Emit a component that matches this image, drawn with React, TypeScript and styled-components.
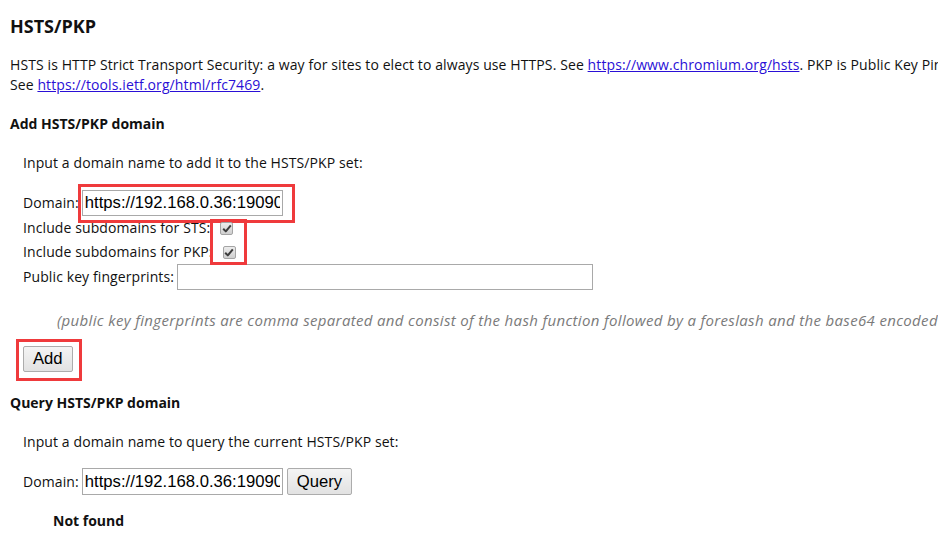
import React from "react";
import styled, { createGlobalStyle } from "styled-components";

const Global = createGlobalStyle`
  html, body {
    margin: 0;
    padding: 0;
    background: #ffffff;
    overflow: hidden;
  }
  body {
    font-family: "Open Sans", "Noto Sans", sans-serif;
    font-size: 14px;
    line-height: 20px;
    letter-spacing: 0.1px;
    color: #111111;
  }
`;

const Page = styled.div`
  padding-left: 10px;
  width: 928px;
  overflow: hidden;
`;

const Title = styled.h2`
  margin: 14px 0 0;
  font-size: 18px;
  line-height: 24px;
  font-weight: 700;
  letter-spacing: 0;
`;

const Intro = styled.p`
  margin: 17px 0 0;
  white-space: nowrap;
`;

const Link = styled.a`
  color: #2a0fd6;
  text-decoration: underline;
`;

const Heading = styled.h4<{ $top: number }>`
  margin: ${(p) => p.$top}px 0 0;
  font-size: 14px;
  line-height: 20px;
  font-weight: 700;
  letter-spacing: 0;
`;

const Section = styled.div`
  margin-left: 13px;
`;

const Prompt = styled.p`
  margin: 19px 0 0;
`;

const FieldRow = styled.div<{ $top: number }>`
  display: flex;
  align-items: baseline;
  margin-top: ${(p) => p.$top}px;
  white-space: nowrap;
`;

const CheckRow = styled.div`
  display: flex;
  align-items: center;
  height: 24px;
  white-space: nowrap;
`;

const Label = styled.span`
  margin-right: 3px;
`;

const Spacer = styled.span`
  width: 4px;
`;

const TextInput = styled.input<{ $w: number; $h: number }>`
  box-sizing: border-box;
  width: ${(p) => p.$w}px;
  height: ${(p) => p.$h}px;
  margin: 0;
  padding: 0 2px;
  border: 1px solid #a9a9a9;
  background: #ffffff;
  font-family: "Liberation Sans", Arial, sans-serif;
  font-size: 16.67px;
  letter-spacing: 0;
  color: #000000;
  outline: none;
`;

const Anchor = styled.span`
  position: relative;
  display: inline-flex;
`;

const Marker = styled.span<{ $l: number; $t: number; $w: number; $h: number }>`
  position: absolute;
  left: ${(p) => p.$l}px;
  top: ${(p) => p.$t}px;
  width: ${(p) => p.$w}px;
  height: ${(p) => p.$h}px;
  box-sizing: border-box;
  border: 3px solid #ef3a3c;
  pointer-events: none;
`;

const Box = styled.span`
  display: inline-flex;
  align-items: center;
  justify-content: center;
  box-sizing: border-box;
  width: 13px;
  height: 13px;
  margin-left: 10px;
  border: 1px solid #a4a4a4;
  border-radius: 2px;
  background: linear-gradient(#ececec, #cfcfcf);
`;

const Note = styled.p`
  margin: 20px 0 0 34px;
  white-space: nowrap;
  font-style: italic;
  font-size: 15px;
  letter-spacing: 0.34px;
  color: #7a7a7a;
`;

const ButtonRow = styled.div<{ $top: number }>`
  display: flex;
  margin-top: ${(p) => p.$top}px;
`;

const Button = styled.button<{ $h: number }>`
  box-sizing: border-box;
  height: ${(p) => p.$h}px;
  margin: 0;
  padding: 0 9px;
  border: 1px solid #acacac;
  border-radius: 2px;
  background: linear-gradient(#f4f4f4, #e2e2e2);
  font-family: "Liberation Sans", Arial, sans-serif;
  font-size: 16.67px;
  letter-spacing: 0;
  color: #000000;
`;

const Result = styled.div`
  margin: 16px 0 0 30px;
  font-weight: 700;
  letter-spacing: 0;
`;

function Check() {
  return (
    <Box>
      <svg width="10" height="9" viewBox="0 0 10 9">
        <path
          d="M1.2 4.8 L3.8 7.4 L8.8 1.4"
          fill="none"
          stroke="#3c3c3c"
          strokeWidth="2"
          strokeLinejoin="round"
        />
      </svg>
    </Box>
  );
}

const DOMAIN = "https://192.168.0.36:19090";

export default function App() {
  return (
    <>
      <Global />
      <Page>
        <Title>HSTS/PKP</Title>
        <Intro>
          HSTS is HTTP Strict Transport Security: a way for sites to elect to always use HTTPS. See{" "}
          <Link href="#">https://www.chromium.org/hsts</Link>. PKP is Public Key Pinning: Chrome "pins" certain
          domains to certain sets of public keys.
          <br />
          See <Link href="#">https://tools.ietf.org/html/rfc7469</Link>.
        </Intro>

        <Heading $top={19}>Add HSTS/PKP domain</Heading>
        <Section>
          <Prompt>Input a domain name to add it to the HSTS/PKP set:</Prompt>
          <FieldRow $top={17}>
            <Label>Domain:</Label>
            <Anchor>
              <TextInput $w={201} $h={26} defaultValue={DOMAIN} />
              <Marker $l={-4} $t={-6} $w={217} $h={39} />
            </Anchor>
          </FieldRow>
          <CheckRow>
            Include subdomains for STS:
            <Anchor>
              <Check />
              <Marker $l={0} $t={-3} $w={37} $h={46} />
            </Anchor>
          </CheckRow>
          <CheckRow>
            Include subdomains for PKP:
            <Check />
          </CheckRow>
          <FieldRow $top={0}>
            <Label>Public key fingerprints:</Label>
            <TextInput $w={416} $h={26} />
          </FieldRow>
          <Note>
            (public key fingerprints are comma separated and consist of the hash function followed by a foreslash and
            the base64 encoded fingerprint, for example "sha256/Guzek9lMwR3KeIS8wwS9gBvVtIg=")
          </Note>
          <ButtonRow $top={16}>
            <Anchor>
              <Button $h={26}>Add</Button>
              <Marker $l={-7} $t={-7} $w={66} $h={42} />
            </Anchor>
          </ButtonRow>
        </Section>

        <Heading $top={21}>Query HSTS/PKP domain</Heading>
        <Section>
          <Prompt>Input a domain name to query the current HSTS/PKP set:</Prompt>
          <FieldRow $top={16}>
            <Label>Domain:</Label>
            <TextInput $w={201} $h={27} defaultValue={DOMAIN} />
            <Spacer />
            <Button $h={27}>Query</Button>
          </FieldRow>
          <Result>Not found</Result>
        </Section>
      </Page>
    </>
  );
}
